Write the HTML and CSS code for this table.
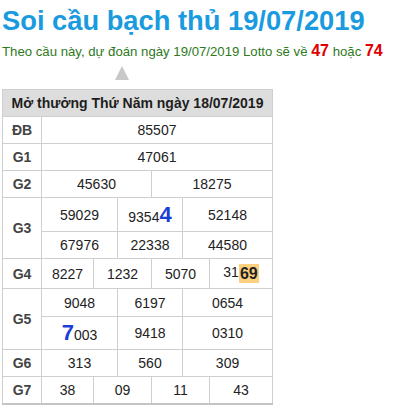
FILE: index.html
```html
<!DOCTYPE html>
<html lang="vi">
<head>
<meta charset="utf-8">
<link rel="stylesheet" href="styles.css">
</head>
<body>
<h1 class="title">Soi cầu bạch thủ 19/07/2019</h1>
<p class="sub">Theo cầu này, dự đoán ngày 19/07/2019 Lotto sẽ về <b class="hot">47</b> hoặc <b class="hot">74</b></p>
<div class="arrow-row"><span class="arrow"></span></div>
<table class="kq">
  <colgroup>
    <col class="c0"><col class="c1"><col class="c2"><col class="c3"><col class="c4"><col class="c5"><col class="c6">
  </colgroup>
  <thead>
    <tr><th colspan="7" class="head">Mở thưởng Thứ Năm ngày 18/07/2019</th></tr>
  </thead>
  <tbody>
    <tr><td class="lbl">ĐB</td><td colspan="6">85507</td></tr>
    <tr><td class="lbl">G1</td><td colspan="6">47061</td></tr>
    <tr><td class="lbl">G2</td><td colspan="3">45630</td><td colspan="3">18275</td></tr>
    <tr class="g3a"><td class="lbl" rowspan="2">G3</td><td colspan="2">59029</td><td colspan="2">9354<span class="big">4</span></td><td colspan="2">52148</td></tr>
    <tr><td colspan="2">67976</td><td colspan="2">22338</td><td colspan="2">44580</td></tr>
    <tr class="g4"><td class="lbl">G4</td><td>8227</td><td colspan="2">1232</td><td colspan="2">5070</td><td>31<span class="mark">69</span></td></tr>
    <tr class="g5a"><td class="lbl" rowspan="2">G5</td><td colspan="2">9048</td><td colspan="2">6197</td><td colspan="2">0654</td></tr>
    <tr class="g5b"><td colspan="2"><span class="big">7</span>003</td><td colspan="2">9418</td><td colspan="2">0310</td></tr>
    <tr><td class="lbl">G6</td><td colspan="2">313</td><td colspan="2">560</td><td colspan="2">309</td></tr>
    <tr><td class="lbl">G7</td><td>38</td><td colspan="2">09</td><td colspan="2">11</td><td>43</td></tr>
  </tbody>
</table>
</body>
</html>
```
FILE: styles.css
```css
html, body {
  margin: 0;
  padding: 0;
  background: #fff;
}
body {
  padding: 0 2px;
  font-family: "Liberation Sans", Arial, sans-serif;
  color: #222;
}
.title {
  margin: 0;
  padding-top: 6px;
  font-size: 27.3px;
  line-height: 30px;
  font-weight: bold;
  color: #1a9be0;
}
.sub {
  margin: 6px 0 0;
  font-size: 13.2px;
  line-height: 18px;
  color: #2e7a1c;
}
.hot {
  color: #e00000;
  font-size: 16px;
}
.arrow-row {
  height: 28px;
  padding-left: 113px;
  padding-top: 5px;
  box-sizing: border-box;
}
.arrow {
  display: block;
  width: 0;
  height: 0;
  border-left: 7px solid transparent;
  border-right: 7px solid transparent;
  border-bottom: 14px solid #c8c8c8;
}
.kq {
  border-collapse: collapse;
  table-layout: fixed;
  width: 271px;
  font-size: 14px;
  border-bottom: 2px solid #c4c4c4;
}
.c0 { width: 39px; }
.c1 { width: 52px; }
.c2 { width: 24px; }
.c3 { width: 34px; }
.c4 { width: 31px; }
.c5 { width: 27px; }
.c6 { width: 63px; }
.kq th, .kq td {
  border: 1px solid #cfcfcf;
  text-align: center;
  height: 26px;
  padding: 0;
  color: #222;
  white-space: nowrap;
}
.kq .head {
  background: #dddddd;
  font-weight: bold;
  font-size: 14px;
  color: #1e1e1e;
}
.kq .lbl {
  font-weight: bold;
  color: #444;
}
.kq tr.g3a td { height: 33px; }
.kq tr.g4 td { height: 29px; }
.kq tr.g5a td { height: 27px; }
.kq tr.g5b td { height: 32px; }
.big {
  font-size: 22px;
  font-weight: bold;
  color: #1a3fd6;
}
.mark {
  display: inline-block;
  vertical-align: middle;
  background: #fdd07e;
  font-weight: bold;
  font-size: 16px;
  line-height: 19px;
  padding: 0 1px;
}
```
